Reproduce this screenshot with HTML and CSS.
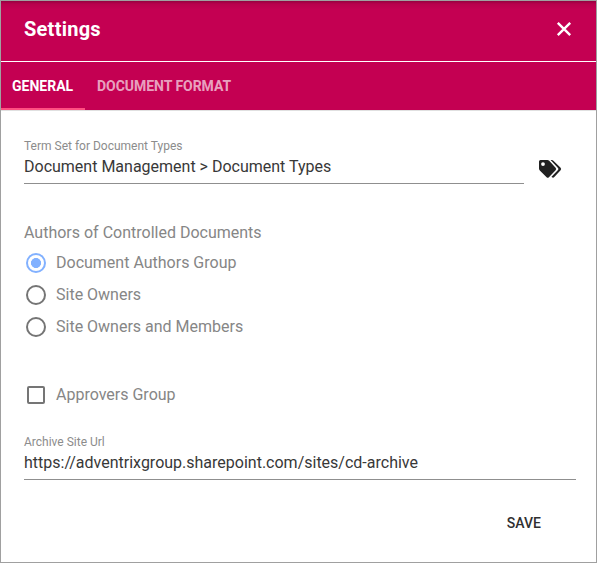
FILE: index.html
```html
<!DOCTYPE html>
<html lang="en">
<head>
<meta charset="utf-8">
<title>Settings</title>
<link rel="stylesheet" href="styles.css">
</head>
<body>
<main class="dialog">
  <header class="header">
    <h1 class="title">Settings</h1>
    <button class="close" aria-label="Close">
      <svg width="16" height="16" viewBox="0 0 16 16"><path d="M1.800 1.800 14.200 14.200M14.200 1.800 1.800 14.200" fill="none" stroke="#fff" stroke-width="2.400"/></svg>
    </button>
  </header>
  <nav class="tabs">
    <a class="tab active">GENERAL</a>
    <a class="tab">DOCUMENT FORMAT</a>
  </nav>
  <section class="content">
    <div class="term-row">
      <div class="field term">
        <span class="label">Term Set for Document Types</span>
        <span class="value">Document Management &gt; Document Types</span>
      </div>
      <svg class="tags" width="24" height="20" viewBox="0 0 24 20">
        <path fill="#212121" fill-rule="evenodd" d="M1 2.500Q1 1 2.500 1H9.300Q10.400 1 11.200 1.800L17.600 8.700Q18.800 10 17.600 11.200L10.900 18.200Q9.800 19.300 8.600 18.200L1.800 11.400Q1 10.600 1 9.500ZM5 3.200A1.900 1.900 0 1 0 5 7A1.900 1.900 0 1 0 5 3.200Z"/>
        <path fill="#212121" d="M12.600 1H13.800Q14.700 1 15.400 1.800L22.600 8.800Q23.700 10 22.600 11.200L16.300 18Q15.200 19.200 14 18.300L13.500 17.800L20 11Q20.900 10 20 9Z"/>
      </svg>
    </div>
    <div class="group" role="radiogroup">
      <div class="group-title">Authors of Controlled Documents</div>
      <div class="option"><i class="radio checked"></i><span>Document Authors Group</span></div>
      <div class="option"><i class="radio"></i><span>Site Owners</span></div>
      <div class="option"><i class="radio"></i><span>Site Owners and Members</span></div>
    </div>
    <div class="option approvers"><i class="checkbox"></i><span>Approvers Group</span></div>
    <div class="field archive">
      <span class="label">Archive Site Url</span>
      <span class="value">https://adventrixgroup.sharepoint.com/sites/cd-archive</span>
    </div>
    <footer class="actions"><button class="save">SAVE</button></footer>
  </section>
</main>
</body>
</html>
```
FILE: styles.css
```css
* { box-sizing: border-box; }
body { margin: 0; font-family: Roboto, "Liberation Sans", sans-serif; color: #212121; }
.dialog { width: 597px; height: 563px; border: 1px solid #a0a0a0; background: #fff; overflow: hidden; }
.header { height: 61px; display: flex; justify-content: space-between; align-items: center; padding: 0 24px 4px 23px; background: linear-gradient(#960040, #b8004c 3px, #c40052 9px); border-bottom: 1px solid #fff; }
.title { margin: 0; font-size: 20px; line-height: 24px; font-weight: 700; letter-spacing: .25px; color: #fff; }
.close { display: flex; padding: 0; border: 0; background: none; }
.tabs { height: 49px; display: flex; background: #c40052; border-bottom: 1px solid #e0e0e0; }
.tab { height: 48px; padding: 0 12px 0 11px; line-height: 48px; font-size: 14px; font-weight: 700; color: rgba(255, 255, 255, .65); white-space: nowrap; }
.tab.active { width: 84px; color: #fff; border-bottom: 2px solid #ff4f81; }
.tab + .tab { padding-left: 12px; letter-spacing: -.04px; }
.content { padding: 26px 20px 0 23px; }
.term-row { display: flex; height: 47px; }
.field { display: flex; flex-direction: column; border-bottom: 1px solid #8f8f8f; white-space: nowrap; }
.term { width: 500px; height: 47px; }
.label { height: 18px; line-height: 18px; font-size: 12px; color: #8c8c8c; }
.value { height: 24px; line-height: 24px; font-size: 16px; color: #383838; }
.tags { margin: 22px 0 0 14px; }
.group { margin-top: 35px; }
.group-title { height: 28px; line-height: 27px; font-size: 16px; color: #868686; }
.option { height: 32px; display: flex; align-items: center; gap: 10px; padding-left: 2px; font-size: 16px; line-height: 32px; color: #868686; }
.radio { width: 20px; height: 20px; border: 2px solid #757575; border-radius: 50%; }
.radio.checked { border-color: #82b1ff; background: radial-gradient(circle, #82b1ff 0 4.7px, transparent 5.3px); }
.approvers { margin-top: 36px; padding-left: 3px; gap: 11px; }
.checkbox { width: 18px; height: 18px; border: 2px solid #757575; border-radius: 2px; }
.archive { height: 47px; margin-top: 22px; }
.actions { display: flex; justify-content: flex-end; padding: 25px 35px 0 0; }
.save { height: 36px; padding: 0; border: 0; background: none; font: 500 14px/36px Roboto, sans-serif; color: #303030; }
```
